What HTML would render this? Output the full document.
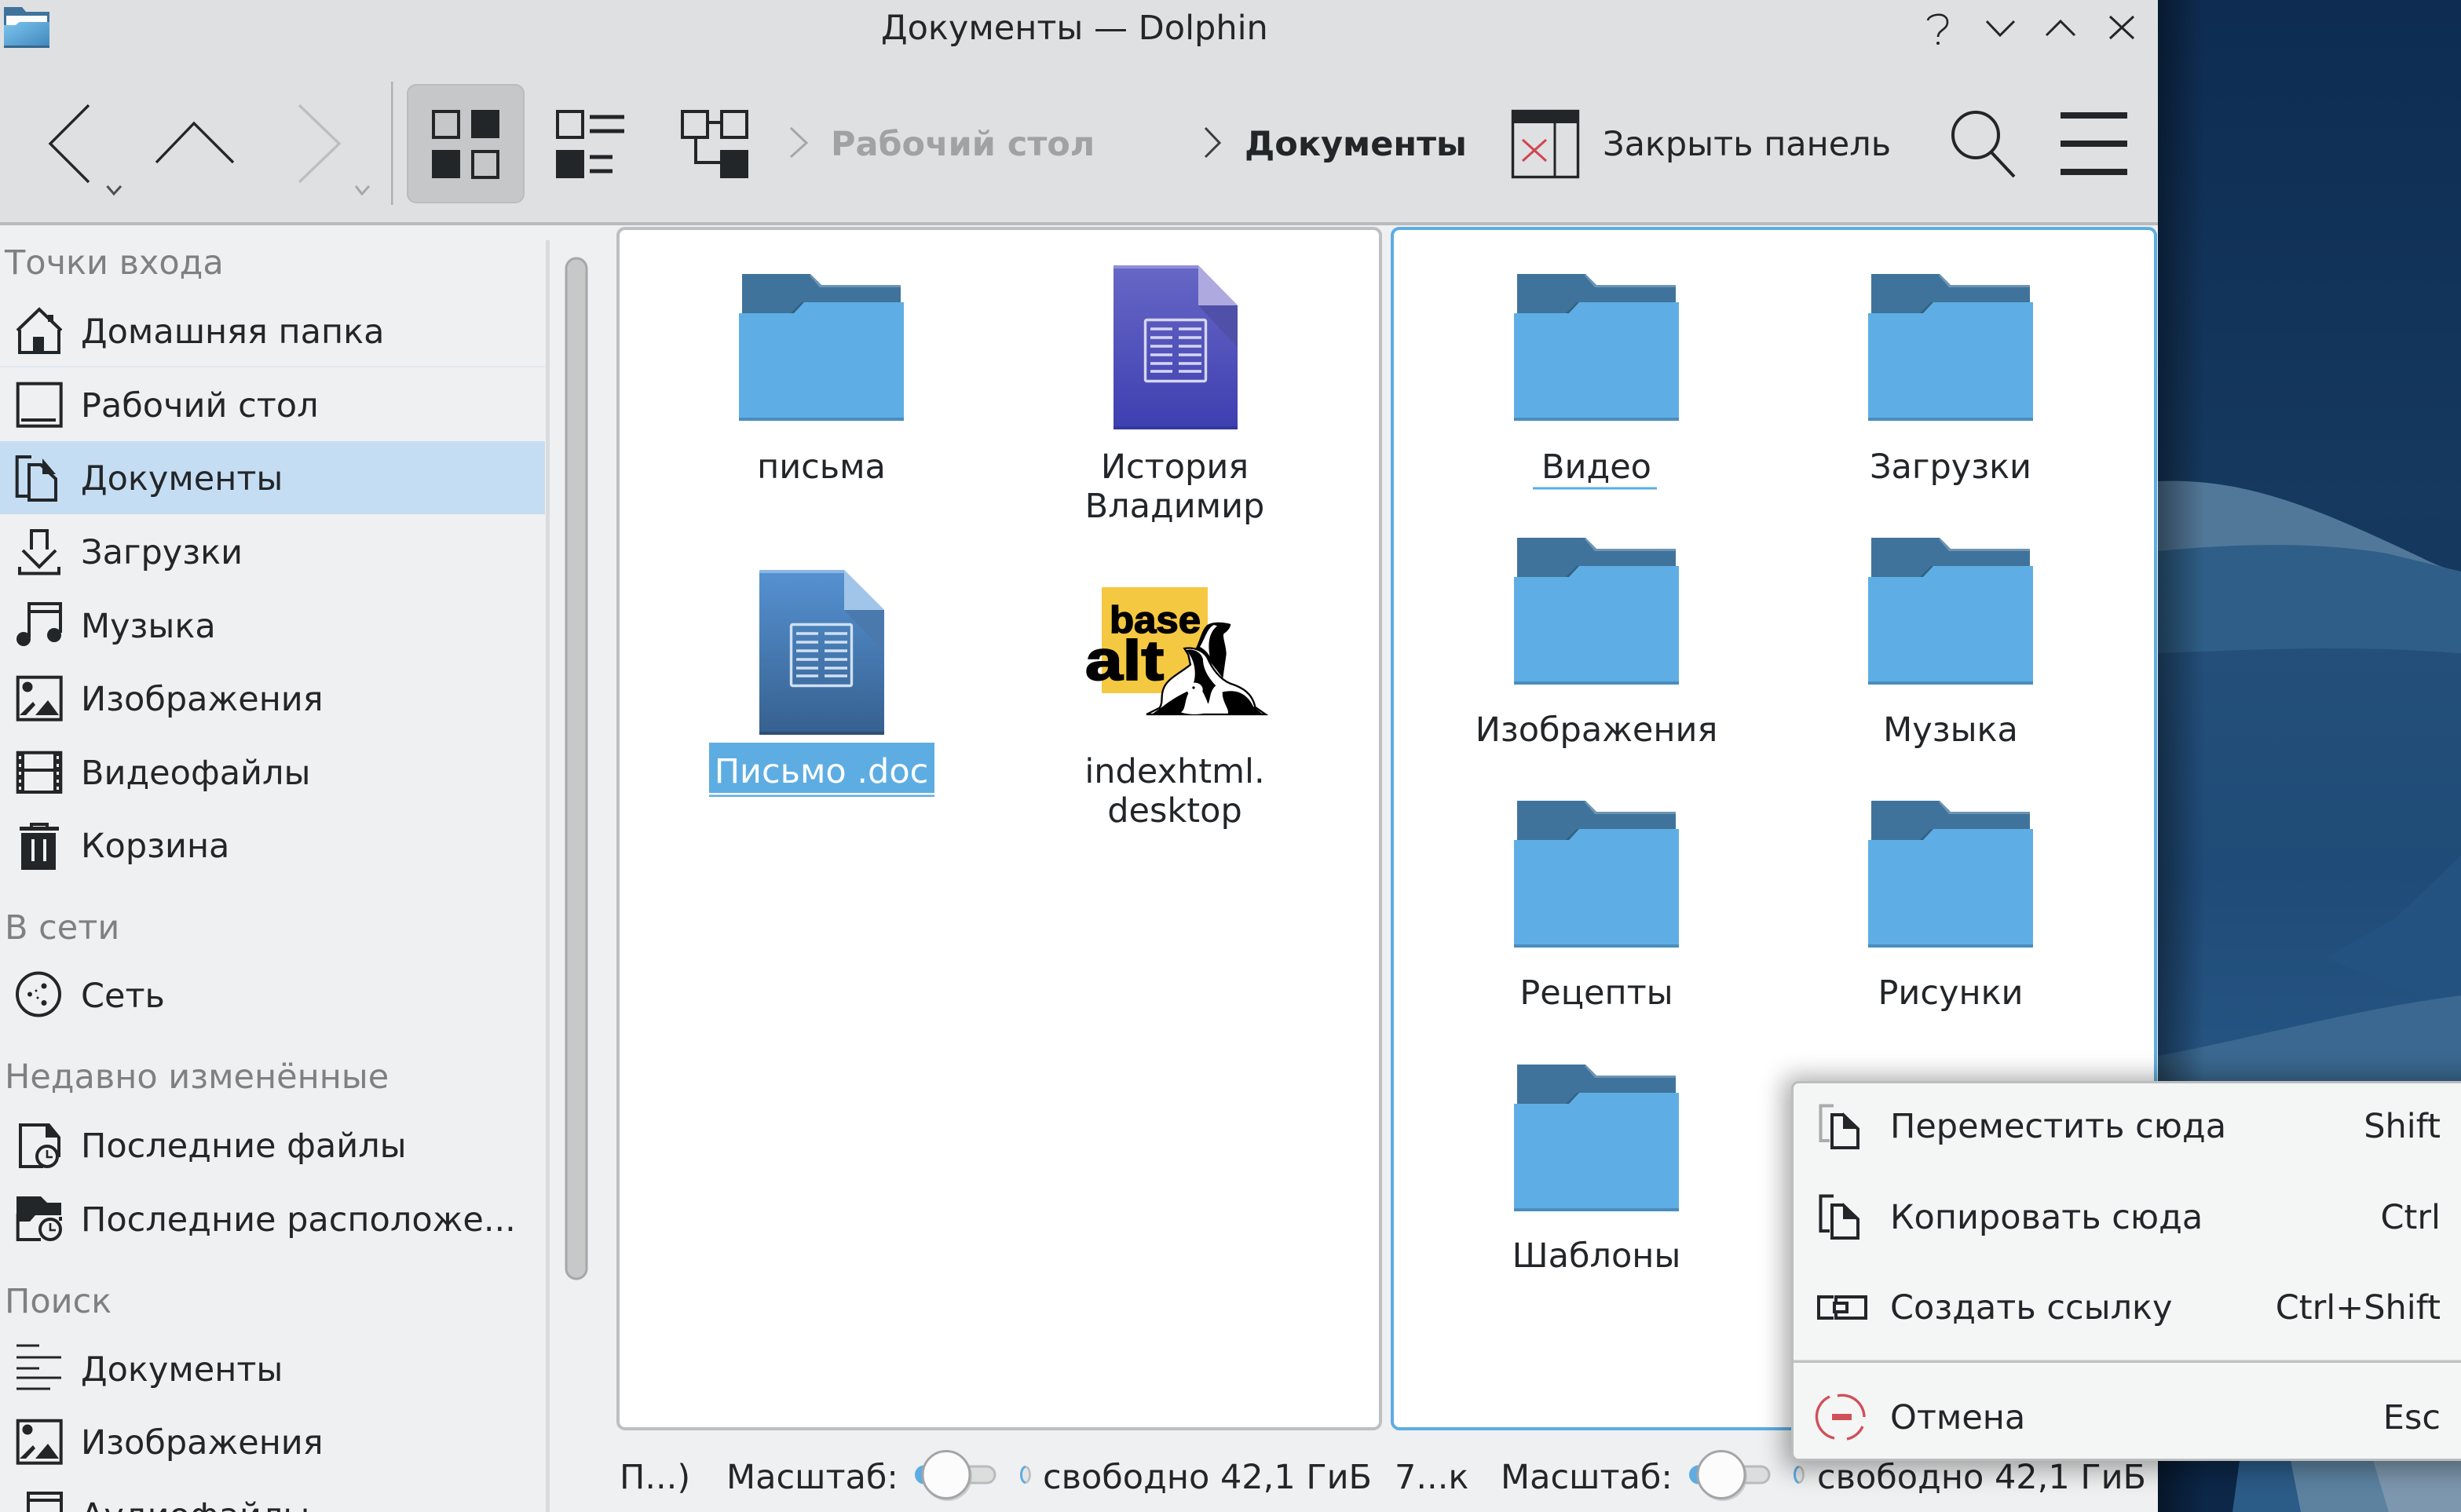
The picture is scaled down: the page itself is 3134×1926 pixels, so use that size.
<!DOCTYPE html>
<html lang="ru"><head><meta charset="utf-8"><title>Документы — Dolphin</title>
<style>
html,body{margin:0;padding:0;background:#eff0f1;width:3134px;height:1926px;overflow:hidden}
svg{display:block;position:absolute;left:0;top:0}
text{font-family:"DejaVu Sans","Liberation Sans",sans-serif;font-size:43px;fill:#232629}
.h{fill:#7e8082}
.b{font-weight:bold}
.m{text-anchor:middle}
.e{text-anchor:end}
.i{fill:none;stroke:#232629;stroke-width:4}
.f{fill:#232629}
</style></head><body>
<svg width="3134" height="1926" viewBox="0 0 3134 1926" xmlns="http://www.w3.org/2000/svg">
<defs>
<linearGradient id="sky" x1="0" y1="0" x2="0" y2="1"><stop offset="0" stop-color="#0e2c52"/><stop offset=".33" stop-color="#15395f"/><stop offset="1" stop-color="#0a2448"/></linearGradient>
<linearGradient id="edge" x1="0" y1="0" x2="1" y2="0"><stop offset="0" stop-color="#000" stop-opacity=".42"/><stop offset="1" stop-color="#000" stop-opacity="0"/></linearGradient>
<linearGradient id="band3" x1="0" y1="0" x2="0" y2="1"><stop offset="0" stop-color="#244f7a"/><stop offset=".5" stop-color="#1f4b78"/><stop offset="1" stop-color="#275684"/></linearGradient>
<linearGradient id="pur" x1="0" y1="0" x2="0" y2="1"><stop offset="0" stop-color="#6767c6"/><stop offset="1" stop-color="#3e3fb0"/></linearGradient>
<linearGradient id="blu" x1="0" y1="0" x2="0" y2="1"><stop offset="0" stop-color="#5692d2"/><stop offset="1" stop-color="#36608f"/></linearGradient>
<linearGradient id="app" x1="0" y1="0" x2="1" y2="1"><stop offset="0" stop-color="#7cc4ee"/><stop offset="1" stop-color="#3f86ba"/></linearGradient>
<filter id="bl" x="-10%" y="-20%" width="120%" height="140%"><feGaussianBlur stdDeviation="16"/></filter>
<g id="folder">
<path d="M4 0H91L105 14H206V60H4Z" fill="#3f739b"/>
<path d="M91 0L105 14H206V17H103L90 2Z" fill="#6d94b3"/>
<path d="M4 50H66L80 36H90L75 50Z" fill="#33607f"/>
<path d="M0 50H70L83 36H210V187H0Z" fill="#5eaee5"/>
<rect x="0" y="183" width="210" height="4" fill="#4a8dbd"/>
</g>
<g id="grid" fill="none" stroke-width="3.400">
<rect x="40.500" y="69.500" width="77" height="78" rx="2"/>
<path d="M47 81H75M83 81H112M47 92H75M83 92H112M47 103H75M83 103H112M47 114H75M83 114H112M47 125H75M83 125H112M47 135H75M83 135H112"/>
</g>
<g id="knobtrack">
<rect x="0" y="0" width="100" height="21" rx="10.500" fill="#dcdddd" stroke="#b9bbbc" stroke-width="3"/>
<path d="M10 0A10.500 10.500 0 0 0 10 21" fill="#5dade2" stroke="#5dade2" stroke-width="3"/>
</g>
</defs>

<!-- wallpaper -->
<rect x="2748" y="0" width="386" height="1926" fill="url(#sky)"/>
<path d="M2748 613C2830 610 2900 628 3000 672S3100 722 3134 728V900H2748Z" fill="#527899"/>
<path d="M2748 702C2850 692 2950 690 3040 705L3134 728V832C3000 822 2900 830 2748 836Z" fill="#2f5f88"/>
<path d="M2748 832C2900 826 3000 822 3134 832V1400H2748Z" fill="url(#band3)"/>
<path d="M3134 1090L3050 1170L2960 1220L3134 1290Z" fill="#235280"/>
<path d="M2748 1345C2880 1320 3000 1285 3134 1268V1400H2748Z" fill="#3a6890"/>
<rect x="2748" y="1860" width="386" height="66" fill="#0c2748"/>
<path d="M2852 1860L2843 1926H3134V1860Z" fill="#2b5b87"/>
<path d="M2917 1860L2930 1926H3134V1860Z" fill="#5c82a0"/>
<path d="M3022 1860L3042 1926H3134V1860Z" fill="#7d97ae"/>
<rect x="2748" y="0" width="60" height="1926" fill="url(#edge)"/>

<!-- window -->
<rect x="0" y="0" width="2748" height="284" fill="#dee0e2"/>
<rect x="0" y="283" width="2748" height="4" fill="#b8babb"/>
<rect x="0" y="287" width="2748" height="1639" fill="#eff0f1"/>

<!-- app icon -->
<path d="M5 9H28L33 15H63V60H5Z" fill="#3f739b"/>
<path d="M8 20H60V28H25L20 32H8Z" fill="#fcfcfc"/>
<path d="M5 32H20L25 28H63V61H5Z" fill="url(#app)"/>
<rect x="5" y="58" width="58" height="3" fill="#37678e"/>

<!-- title -->
<text x="1122" y="50">Документы — Dolphin</text>
<path d="M2455 26C2456 18 2480 14 2480 28C2480 38 2468 38 2468 47" fill="none" stroke="#232629" stroke-width="2.600"/><circle cx="2468" cy="55" r="2" fill="#232629"/>
<path d="M2530 27L2547 45L2565 27M2606 45L2624 27L2642 45M2687 21L2717 49M2717 21L2687 49" fill="none" stroke="#232629" stroke-width="3"/>

<!-- toolbar -->
<path d="M113 134L64 183L113 232M199 207L247 157L297 207" fill="none" stroke="#232629" stroke-width="3.400"/>
<path d="M136.500 237L145 247L154 237" fill="none" stroke="#4d5052" stroke-width="3"/>
<path d="M381 134L432 183L381 232" fill="none" stroke="#bcbebf" stroke-width="3.400"/>
<path d="M453 237L461 247L470 237" fill="none" stroke="#a5a7a8" stroke-width="3"/>
<rect x="498" y="104" width="2.500" height="157" fill="#b0b2b3"/>
<rect x="519" y="108" width="148" height="150" rx="11" fill="#c6c7c9" stroke="#bbbcbd" stroke-width="2"/>
<g class="i">
<rect x="552" y="142" width="32" height="33"/><rect x="602" y="193" width="32" height="33"/>
<rect x="710" y="142" width="32" height="33"/>
<rect x="869" y="142" width="32" height="33"/><rect x="919" y="142" width="32" height="33"/>
<path d="M902 156H917M886 176V207H917"/>
</g>
<g class="f">
<rect x="600" y="140" width="36" height="36"/><rect x="550" y="191" width="36" height="36"/>
<rect x="708" y="191" width="36" height="36"/>
<rect x="751" y="146.500" width="44" height="5"/><rect x="751" y="164.500" width="44" height="5"/>
<rect x="751" y="197.500" width="29" height="5"/><rect x="751" y="215.500" width="29" height="5"/>
<rect x="917" y="191" width="36" height="36"/>
</g>
<path d="M1007 163L1027 182L1007 200" fill="none" stroke="#a5a7a8" stroke-width="3"/>
<text class="b" x="1058" y="198" style="fill:#a0a2a3">Рабочий стол</text>
<path d="M1535 163L1553 182L1535 200" fill="none" stroke="#3a3d40" stroke-width="3"/>
<text class="b" x="1585" y="198">Документы</text>
<rect x="1926.500" y="141.500" width="83" height="84" fill="none" stroke="#232629" stroke-width="3.400"/>
<rect x="1925" y="140" width="86" height="17" fill="#232629"/>
<path d="M1980 157V226" stroke="#232629" stroke-width="3"/>
<path d="M1939 178L1969 205M1969 178L1939 205" stroke="#d0454f" stroke-width="3" fill="none"/>
<text x="2041" y="198">Закрыть панель</text>
<circle cx="2516" cy="172" r="29" fill="none" stroke="#232629" stroke-width="4"/>
<path d="M2535 193L2565 225" stroke="#232629" stroke-width="4" fill="none"/>
<g class="f"><rect x="2624" y="143" width="85" height="8"/><rect x="2624" y="179" width="85" height="8"/><rect x="2624" y="215" width="85" height="8"/></g>

<!-- sidebar -->
<rect x="0" y="562" width="694" height="93" fill="#c5ddf3"/>
<rect x="0" y="466" width="694" height="2" fill="#dfe7ee"/>
<rect x="695" y="306" width="5" height="1620" fill="#d9dbdc"/>
<rect x="721" y="329" width="26" height="1300" rx="13" fill="#c7c9c9" stroke="#a5a7a8" stroke-width="3"/>

<text class="h" x="6" y="349">Точки входа</text>
<text x="103" y="437">Домашняя папка</text>
<text x="103" y="531">Рабочий стол</text>
<text x="103" y="624">Документы</text>
<text x="103" y="718">Загрузки</text>
<text x="103" y="812">Музыка</text>
<text x="103" y="905">Изображения</text>
<text x="103" y="999">Видеофайлы</text>
<text x="103" y="1092">Корзина</text>
<text class="h" x="6" y="1196">В сети</text>
<text x="103" y="1283">Сеть</text>
<text class="h" x="6" y="1386">Недавно изменённые</text>
<text x="103" y="1474">Последние файлы</text>
<text x="103" y="1568">Последние расположе...</text>
<text class="h" x="6" y="1672">Поиск</text>
<text x="103" y="1759">Документы</text>
<text x="103" y="1852">Изображения</text>
<text x="103" y="1945">Аудиофайлы</text>

<!-- sidebar icons -->
<g class="i">
<path d="M22 421L50 394L78 421M25 420V449H75V420"/>
<rect x="22.700" y="488.700" width="55" height="54"/><path d="M27 535H71"/>
<path d="M37 632H21.700V582H40M37 592H52L71 610V637H37Z"/>
<path d="M40 700V676H60V700M29 701L50 722L71 701M25 722V730.500H75V722"/>
<path d="M37 812V769H77V806M37 779H77"/>
<rect x="22.700" y="862.700" width="55" height="54"/>
<path d="M22.700 958.700H77.300V1009H22.700Z M29 981H70M29 958V1010M70 958V1010"/>
<path d="M40 1054V1050H60V1054"/>
<circle cx="49" cy="1266.500" r="27"/>
<path d="M75 1474V1449L62 1433H26V1486H55"/>
<circle cx="60" cy="1473" r="13"/><path d="M60 1465V1474H67" stroke-width="2.600"/>
<path d="M22.700 1546V1579H52M77 1550V1555"/>
<circle cx="64" cy="1566" r="13"/><path d="M64 1558V1567H71" stroke-width="2.600"/>
<path d="M21 1714H50M21 1729H78M21 1743H50M21 1755H78M21 1769H64" stroke-width="3"/>
<rect x="22.700" y="1809.700" width="55" height="54"/>
<path d="M36 1926V1902H78V1926M36 1911H78"/>
</g>
<g class="f">
<rect x="42" y="429" width="14" height="20"/><rect x="61" y="401" width="7" height="9"/>
<path d="M54 584L71 604H54Z"/>
<circle cx="30" cy="814" r="9"/><circle cx="69" cy="809" r="9"/>
<circle cx="35" cy="875" r="6.500"/><path d="M45 911L61 892L75 911Z"/><path d="M25 911L42 894L45 898L33 911Z"/>
<rect x="21" y="957" width="9" height="53"/><rect x="69" y="957" width="9" height="53"/>
<rect x="25" y="1053" width="50" height="5"/><rect x="27" y="1061" width="44" height="47"/>
<circle cx="38" cy="1266.500" r="3"/><circle cx="56" cy="1256" r="3.500"/><circle cx="56" cy="1277.500" r="3.500"/><circle cx="46" cy="1262" r="1.500"/><circle cx="48" cy="1271" r="1.500"/>
<path d="M58 1431L75 1449H58Z"/>
<path d="M21 1524H52L60 1532H78V1548H45L38 1556H21Z"/>
<circle cx="35" cy="1821" r="6.500"/><path d="M45 1858L61 1839L75 1858Z"/><path d="M25 1858L42 1841L45 1845L33 1858Z"/>
</g>
<g fill="#eff0f1">
<rect x="24" y="963" width="3" height="4"/><rect x="24" y="973" width="3" height="4"/><rect x="24" y="983" width="3" height="4"/><rect x="24" y="993" width="3" height="4"/><rect x="24" y="1002" width="3" height="4"/>
<rect x="72" y="963" width="3" height="4"/><rect x="72" y="973" width="3" height="4"/><rect x="72" y="983" width="3" height="4"/><rect x="72" y="993" width="3" height="4"/><rect x="72" y="1002" width="3" height="4"/>
<rect x="40" y="1069" width="4" height="28"/><rect x="55" y="1069" width="4" height="28"/>
</g>

<!-- panels -->
<rect x="787" y="291" width="971" height="1529" rx="9" fill="#fff" stroke="#bdbfc0" stroke-width="4"/>
<rect x="1773" y="291" width="972" height="1529" rx="9" fill="#fff" stroke="#5dade2" stroke-width="4"/>

<!-- left panel items -->
<use href="#folder" x="941" y="349"/>
<text class="m" x="1046" y="609">письма</text>

<path d="M1418 338H1526L1576 389V547H1418Z" fill="url(#pur)"/>
<rect x="1418" y="338" width="108" height="4" fill="#8e8eda"/>
<rect x="1418" y="543" width="158" height="4" fill="#3338a0"/>
<path d="M1526 389H1576V443Z" fill="#5050a8"/>
<path d="M1526 338L1576 389H1526Z" fill="#aeaadf"/>
<use href="#grid" x="1418" y="338" stroke="#d6d6f2"/>
<text class="m" x="1496" y="609">История</text>
<text class="m" x="1496" y="659">Владимир</text>

<path d="M967 726H1075L1126 777V936H967Z" fill="url(#blu)"/>
<rect x="967" y="726" width="108" height="4" fill="#8bb7e6"/>
<rect x="967" y="932" width="159" height="4" fill="#2d5079"/>
<path d="M1075 777H1126V831Z" fill="#4a79ad"/>
<path d="M1075 726L1126 777H1075Z" fill="#a0c5e9"/>
<use href="#grid" x="967" y="726" stroke="#cfe0f2"/>
<rect x="903" y="946" width="287" height="69" fill="#5dade2"/>
<rect x="903" y="1010" width="287" height="2.500" fill="#fff"/>
<text class="m" x="1046" y="997" style="fill:#fff">Письмо .doc</text>

<!-- base alt logo -->
<rect x="1403" y="748" width="135" height="135" fill="#f5c842"/>
<text x="1413" y="806" textLength="116" lengthAdjust="spacingAndGlyphs" style="font-family:'Liberation Sans',sans-serif;font-weight:bold;font-size:48px;fill:#000;stroke:#000;stroke-width:1.500">base</text>
<text x="1382" y="866" textLength="100" lengthAdjust="spacingAndGlyphs" style="font-family:'Liberation Sans',sans-serif;font-weight:bold;font-size:71px;fill:#000;stroke:#000;stroke-width:2">alt</text>
<g transform="translate(1300 700) scale(.33333)">
<!-- back seal -->
<path d="M802 285C770 276 730 275 710 290C690 310 685 345 668 378C700 395 740 450 772 492L785 400C785 370 770 335 775 322C790 312 800 300 802 285Z" fill="#000"/>
<path d="M738 288C712 300 704 340 684 372C700 380 712 392 722 408C714 360 718 318 750 292Z" fill="#fff"/>
<!-- front seal white body with black outline -->
<path d="M625 378C660 372 695 385 712 412C730 455 760 495 800 512C850 528 885 552 895 602L935 630H480L530 605C545 585 532 555 548 525C565 490 612 470 648 440L640 402Z" fill="#fff" stroke="#000" stroke-width="7"/>
<path d="M632 384C660 378 690 392 696 420C696 455 716 490 745 520C720 540 725 575 715 590C700 550 692 530 660 510C672 470 664 420 632 384Z" fill="#000"/>
<path d="M542 600C580 570 610 555 640 540L640 630H500ZM770 545C810 535 860 540 888 600L925 630H790C800 610 770 590 770 545Z" fill="#000"/>
<!-- pup -->
<ellipse cx="665" cy="535" rx="30" ry="26" fill="#fff"/>
<path d="M640 550C625 580 630 610 612 622C640 632 690 632 712 622C718 600 715 570 692 550Z" fill="#fff"/>
<circle cx="660" cy="528" r="5" fill="#000"/>
</g>
<text class="m" x="1496" y="997">indexhtml.</text>
<text class="m" x="1496" y="1047">desktop</text>

<!-- right panel items -->
<use href="#folder" x="1928" y="349"/><use href="#folder" x="2379" y="349"/>
<use href="#folder" x="1928" y="685"/><use href="#folder" x="2379" y="685"/>
<use href="#folder" x="1928" y="1020"/><use href="#folder" x="2379" y="1020"/>
<use href="#folder" x="1928" y="1356"/>
<text class="m" x="2033" y="609">Видео</text>
<rect x="1952" y="620.500" width="158" height="3" fill="#5dade2"/>
<text class="m" x="2484" y="609">Загрузки</text>
<text class="m" x="2033" y="944">Изображения</text>
<text class="m" x="2484" y="944">Музыка</text>
<text class="m" x="2033" y="1279">Рецепты</text>
<text class="m" x="2484" y="1279">Рисунки</text>
<text class="m" x="2033" y="1614">Шаблоны</text>

<!-- status bars -->
<text x="789" y="1896">П...)</text>
<text x="925" y="1896">Масштаб:</text>
<use href="#knobtrack" x="1167" y="1868"/>
<circle cx="1207" cy="1881" r="31" fill="#b5b7b8" opacity=".6"/>
<circle cx="1205" cy="1878.500" r="30" fill="#fcfcfc" stroke="#a3a5a6" stroke-width="3"/>
<ellipse cx="1306" cy="1878.500" rx="5.500" ry="10" fill="#e4e5e5" stroke="#b9bbbc" stroke-width="2.500"/>
<path d="M1306 1868.500A5.500 10 0 0 0 1306 1888.500" fill="none" stroke="#5dade2" stroke-width="3"/>
<text x="1328" y="1896">свободно 42,1 ГиБ</text>
<text x="1776" y="1896">7...к</text>
<text x="1911" y="1896">Масштаб:</text>
<use href="#knobtrack" x="2153" y="1868"/>
<circle cx="2194" cy="1881" r="31" fill="#b5b7b8" opacity=".6"/>
<circle cx="2192" cy="1878.500" r="30" fill="#fcfcfc" stroke="#a3a5a6" stroke-width="3"/>
<ellipse cx="2291" cy="1878.500" rx="5.500" ry="10" fill="#e4e5e5" stroke="#b9bbbc" stroke-width="2.500"/>
<path d="M2291 1868.500A5.500 10 0 0 0 2291 1888.500" fill="none" stroke="#5dade2" stroke-width="3"/>
<text x="2314" y="1896">свободно 42,1 ГиБ</text>

<!-- context menu -->
<rect x="2272" y="1372" width="900" height="500" rx="10" fill="#000" opacity=".34" filter="url(#bl)"/>
<rect x="2282.500" y="1378.500" width="900" height="481" rx="8" fill="#f4f5f5" stroke="#bbbdbe" stroke-width="3"/>
<rect x="2284" y="1732.500" width="850" height="3.500" fill="#c0c2c3"/>
<text x="2407" y="1449">Переместить сюда</text>
<text x="2407" y="1565">Копировать сюда</text>
<text x="2407" y="1680">Создать ссылку</text>
<text x="2407" y="1820">Отмена</text>
<text class="e" x="3108" y="1449">Shift</text>
<text class="e" x="3108" y="1565">Ctrl</text>
<text class="e" x="3108" y="1680">Ctrl+Shift</text>
<text class="e" x="3108" y="1820">Esc</text>
<path d="M2330 1453H2318.500V1408.500H2335" fill="none" stroke="#a9abac" stroke-width="4"/>
<path d="M2333 1420H2347L2366 1438V1462H2333Z" fill="none" stroke="#232629" stroke-width="4"/>
<path d="M2347 1417L2368 1438H2347Z" fill="#232629"/>
<path d="M2330 1568H2318.500V1523.500H2335" fill="none" stroke="#232629" stroke-width="4"/>
<path d="M2333 1535H2347L2366 1553V1577H2333Z" fill="none" stroke="#232629" stroke-width="4"/>
<path d="M2347 1532L2368 1553H2347Z" fill="#232629"/>
<path d="M2335 1652H2316V1679H2335M2338 1658V1652H2376V1679H2338V1673M2336 1660H2352V1671H2336Z" fill="none" stroke="#232629" stroke-width="4"/>
<path d="M2330 1779A28 28 0 0 0 2336 1832M2352 1833A28 28 0 0 0 2372 1817M2374 1805A28 28 0 0 0 2340 1778" fill="none" stroke="#d0505a" stroke-width="3.400"/>
<rect x="2333" y="1801" width="25" height="8" fill="#d0505a"/>
</svg>
</body></html>
